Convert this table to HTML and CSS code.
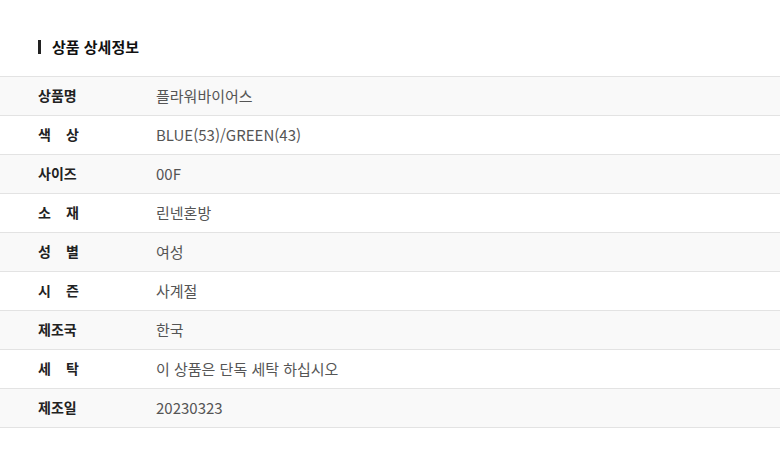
FILE: index.html
```html
<!DOCTYPE html>
<html lang="ko">
<head>
<meta charset="utf-8">
<link rel="stylesheet" href="styles.css">
</head>
<body>
<section class="detail">
  <h2 class="detail-title">상품 상세정보</h2>
  <div class="info-table">
    <div class="row"><div class="label"><span>상품명</span></div><div class="value">플라워바이어스</div></div>
    <div class="row"><div class="label"><span>색 상</span></div><div class="value">BLUE(53)/GREEN(43)</div></div>
    <div class="row"><div class="label"><span>사이즈</span></div><div class="value">00F</div></div>
    <div class="row"><div class="label"><span>소 재</span></div><div class="value">린넨혼방</div></div>
    <div class="row"><div class="label"><span>성 별</span></div><div class="value">여성</div></div>
    <div class="row"><div class="label"><span>시 즌</span></div><div class="value">사계절</div></div>
    <div class="row"><div class="label"><span>제조국</span></div><div class="value">한국</div></div>
    <div class="row"><div class="label"><span>세 탁</span></div><div class="value">이 상품은 단독 세탁 하십시오</div></div>
    <div class="row"><div class="label"><span>제조일</span></div><div class="value">20230323</div></div>
  </div>
</section>
</body>
</html>
```

FILE: styles.css
```css
* { box-sizing: border-box; }
body {
  margin: 0;
  background: #fff;
  font-family: "Noto Sans CJK KR", "Noto Sans", sans-serif;
  color: #222;
}
.detail {
  padding-top: 37px;
}
.detail-title {
  margin: 0 0 19px 38px;
  padding-left: 14px;
  position: relative;
  font-size: 15px;
  font-weight: 700;
  line-height: 20px;
  color: #111;
}
.detail-title::before {
  content: "";
  position: absolute;
  left: 0;
  top: 3px;
  width: 3px;
  height: 14px;
  background: #222;
}
.info-table {
  border-top: 1px solid #e3e3e3;
}
.row {
  display: grid;
  grid-template-columns: 156px 1fr;
  align-items: center;
  height: 39px;
  padding-bottom: 2px;
  border-bottom: 1px solid #e3e3e3;
}
.row:nth-child(odd) {
  background: #f9f9f9;
}
.label {
  padding-left: 38px;
  font-size: 14px;
  font-weight: 700;
  color: #222;
}
.label span {
  display: block;
  width: 41px;
  text-align: justify;
  text-align-last: justify;
  white-space: nowrap;
}
.value {
  font-size: 15px;
  color: #555;
}
```
